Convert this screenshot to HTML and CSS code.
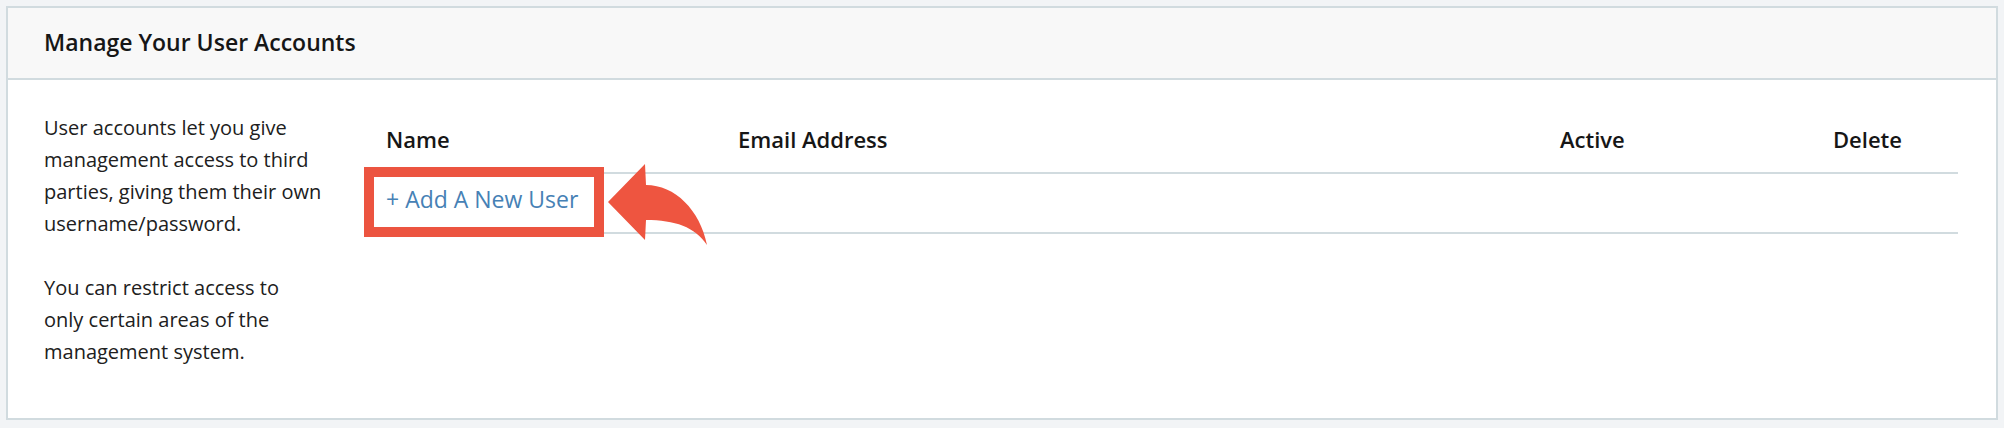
FILE: index.html
```html
<!DOCTYPE html>
<html>
<head>
<meta charset="utf-8">
<link rel="stylesheet" href="styles.css">
</head>
<body>
<div class="card">
  <div class="card-header">Manage Your User Accounts</div>
  <div class="card-body">
    <div class="intro">
      <p>User accounts let you give<br>management access to third<br>parties, giving them their own<br>username/password.</p>
      <p>You can restrict access to<br>only certain areas of the<br>management system.</p>
    </div>
    <div class="users">
      <div class="th">Name</div>
      <div class="th">Email Address</div>
      <div class="th">Active</div>
      <div class="th">Delete</div>
      <div class="td add-cell">
        <a class="add-link" href="#">+ Add A New User</a>
        <span class="highlight"></span>
        <svg class="arrow" width="106" height="90" viewBox="0 0 106 90"><path d="M3,42 L40,4 L41,25 C70,25 95,50 102,85 C90,67 70,60 41,60 L40,80 Z" fill="#ee5540"/></svg>
      </div>
      <div class="td"></div>
      <div class="td"></div>
      <div class="td"></div>
    </div>
  </div>
</div>
</body>
</html>
```

FILE: styles.css
```css
html, body {
  margin: 0;
  padding: 0;
}
body {
  background: #f2f4f6;
  padding: 6px;
  font-family: "Open Sans", "Liberation Sans", sans-serif;
  color: #1c1c1c;
}
.card {
  border: 2px solid #d1dbdf;
  background: #fff;
  height: 414px;
  box-sizing: border-box;
}
.card-header {
  background: #f8f8f8;
  border-bottom: 2px solid #d1dbdf;
  height: 68px;
  padding: 0 0 2px 36px;
  font-size: 23px;
  font-weight: 600;
  line-height: 68px;
  color: #161616;
}
.card-body {
  display: flex;
  padding: 32px 38px 0 36px;
}
.intro {
  width: 290px;
  flex: none;
  font-size: 20px;
  line-height: 32px;
  color: #202020;
}
.intro p {
  margin: 0 0 32px;
}
.users {
  margin-left: 36px;
  flex: 1;
  display: grid;
  grid-template-columns: 352px 822px 273px 1fr;
  align-self: flex-start;
}
.th {
  padding: 11px 16px 17px;
  line-height: 32px;
  font-size: 22px;
  font-weight: 600;
  color: #161616;
  border-bottom: 2px solid #d1dbdf;
}
.td {
  padding: 9px 16px 17px;
  line-height: 32px;
  height: 32px;
  border-bottom: 2px solid #d1dbdf;
}
.add-cell {
  position: relative;
}
.add-link {
  color: #4681b5;
  text-decoration: none;
  font-size: 23px;
  font-weight: 400;
}
.highlight {
  position: absolute;
  left: -6px;
  top: -7px;
  width: 240px;
  height: 70px;
  box-sizing: border-box;
  border: 10px solid #ec5440;
}
.arrow {
  position: absolute;
  left: 235px;
  top: -14px;
}
```
